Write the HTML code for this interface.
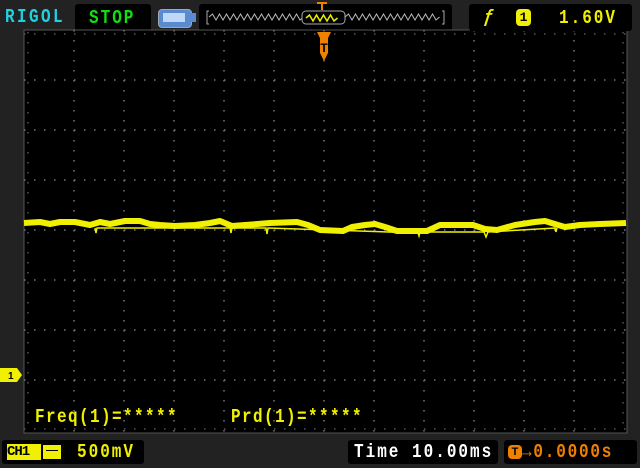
<!DOCTYPE html>
<html><head><style>
body{margin:0;width:640px;height:468px;background:#222;overflow:hidden;font-family:"Liberation Mono","DejaVu Sans Mono",monospace;position:relative}
.box{position:absolute;background:#000;border-radius:3px}
.t{position:absolute;font-size:16px;font-weight:bold;white-space:nowrap;letter-spacing:2px;line-height:16px;transform:scaleY(1.2);transform-origin:0 50%}
</style></head><body>
<div class="t" style="left:5px;top:9px;color:#1fd0e0;letter-spacing:2.4px">RIGOL</div>
<div class="box" style="left:75px;top:4px;width:76px;height:27px"></div>
<div class="t" style="left:89px;top:10px;color:#10e010">STOP</div>
<div style="position:absolute;left:158px;top:9px;width:32px;height:17px;background:#5a8ad0;border-radius:4px;border:1px solid #9ab"></div>
<div style="position:absolute;left:163px;top:13px;width:22px;height:9px;background:#c0d8f8"></div>
<div style="position:absolute;left:191px;top:13px;width:5px;height:9px;background:#5a8ad0"></div>
<div class="box" style="left:199px;top:4px;width:253px;height:27px"></div>
<svg style="position:absolute;left:0;top:0" width="640" height="468">
<polyline fill="none" stroke="#aaa" stroke-width="1" points="209,11 207,11 207,24 209,24"/>
<polyline fill="none" stroke="#aaa" stroke-width="1" points="442,11 444,11 444,24 442,24"/>
<path fill="none" stroke="#bbb" stroke-width="1" d="M209,17 l3.5,-3 3.5,6 3.5,-6 3.5,6 3.5,-6 3.5,6 3.5,-6 3.5,6 3.5,-6 3.5,6 3.5,-6 3.5,6 3.5,-6 3.5,6 3.5,-6 3.5,6 3.5,-6 3.5,6 3.5,-6 3.5,6 3.5,-6 3.5,6 3.5,-6 3.5,6 3.5,-6 3.5,6 3.5,-3"/>
<path fill="none" stroke="#bbb" stroke-width="1" d="M345,17 l3.5,-3 3.5,6 3.5,-6 3.5,6 3.5,-6 3.5,6 3.5,-6 3.5,6 3.5,-6 3.5,6 3.5,-6 3.5,6 3.5,-6 3.5,6 3.5,-6 3.5,6 3.5,-6 3.5,6 3.5,-6 3.5,6 3.5,-6 3.5,6 3.5,-6 3.5,6 3.5,-6 3.5,6 3.5,-3"/>
<rect x="302" y="11" width="43" height="13" rx="4" fill="#000" stroke="#aaa"/>
<path fill="none" stroke="#ee0" stroke-width="1.5" d="M306,18 l3.5,-3 3.5,6 3.5,-6 3.5,6 3.5,-6 3.5,6 3.5,-6 3.5,6 3.5,-3"/>
<path d="M317,3h10M322,3v7" stroke="#f08000" stroke-width="2"/>
<rect x="24" y="30" width="603" height="403" fill="#000" stroke="#555"/>
<path d="M74,30v403M124,30v403M174,30v403M224,30v403M274,30v403M324,30v403M374,30v403M424,30v403M474,30v403M524,30v403M574,30v403" stroke="#777" stroke-dasharray="1.5 8.5" stroke-width="1.5"/>
<path d="M24,80h603M24,130h603M24,180h603M24,230h603M24,280h603M24,330h603M24,380h603" stroke="#777" stroke-dasharray="1.5 8.5" stroke-width="1.5"/>
<path d="M28,32v399M623,32v399M24,34h603M24,429h603" stroke="#555" stroke-dasharray="1.5 8.5" stroke-width="1.5"/>
<polygon points="317,32 331,32 328,38 328,53 324,61 320,53 320,38" fill="#f08000"/>
<text x="324" y="52" fill="#000" font-size="12" font-weight="bold" text-anchor="middle" font-family="Liberation Sans">T</text>
<polyline fill="none" stroke="#f0f000" stroke-width="6" stroke-linejoin="round" points="24,223 40,222 50,224 60,222 75,222 90,225 100,222 110,224 125,221 140,221 150,224 160,225 175,226 195,225 210,223 220,221 232,226 245,225 270,223 297,222 308,225 320,230 343,231 352,227 365,225 375,224 385,227 397,231 427,231 440,225 452,225 473,225 485,229 497,230 515,225 535,222 545,221 558,225 565,227 580,225 600,224 626,223"/>
<polyline fill="none" stroke="#f0f000" stroke-width="1.5" points="95,228 96,233 97,228 230,228 231,233 232,228 266,228 267,234 268,228 418,233 419,236 420,232 484,232 486,237 488,232 555,228 556,232 557,228"/>
<polygon points="0,368 17,368 22,375 17,382 0,382" fill="#f0f000"/>
<text x="8" y="379" fill="#000" font-size="10" font-weight="bold" font-family="Liberation Sans">1</text>
</svg>
<div class="t" style="left:35px;top:409px;color:#f0f000;letter-spacing:1.4px">Freq(1)=*****</div>
<div class="t" style="left:231px;top:409px;color:#f0f000;letter-spacing:1.4px">Prd(1)=*****</div>
<div class="box" style="left:469px;top:4px;width:163px;height:27px"></div>
<div class="t" style="left:484px;top:9px;color:#f0f000;font-style:italic">ƒ</div>
<div style="position:absolute;left:516px;top:9px;width:15px;height:17px;background:#f0f000;border-radius:4px;font:bold 13px 'Liberation Mono';text-align:center;line-height:17px;color:#000">1</div>
<div class="t" style="left:559px;top:10px;color:#f0f000">1.60V</div>
<div class="box" style="left:2px;top:440px;width:142px;height:24px"></div>
<div style="position:absolute;left:7px;top:444px;width:34px;height:16px;background:#f0f000;font:bold 14px 'Liberation Mono';color:#000;line-height:16px;letter-spacing:-1px">CH1</div>
<div style="position:absolute;left:43px;top:445px;width:18px;height:14px;background:#f0f000"></div>
<div style="position:absolute;left:46px;top:450px;width:12px;height:1px;background:#000"></div>
<div class="t" style="left:77px;top:444px;color:#f0f000">500mV</div>
<div class="box" style="left:348px;top:440px;width:150px;height:24px"></div>
<div class="t" style="left:354px;top:444px;color:#fff;letter-spacing:2px">Time 10.00ms</div>
<div class="box" style="left:504px;top:440px;width:133px;height:24px"></div>
<div style="position:absolute;left:508px;top:445px;width:14px;height:14px;background:#f08000;border-radius:4px;font:bold 11px 'Liberation Sans';color:#000;text-align:center;line-height:14px">T</div>
<div class="t" style="left:522px;top:444px;color:#f08000;letter-spacing:1.8px">→0.0000s</div>
</body></html>
